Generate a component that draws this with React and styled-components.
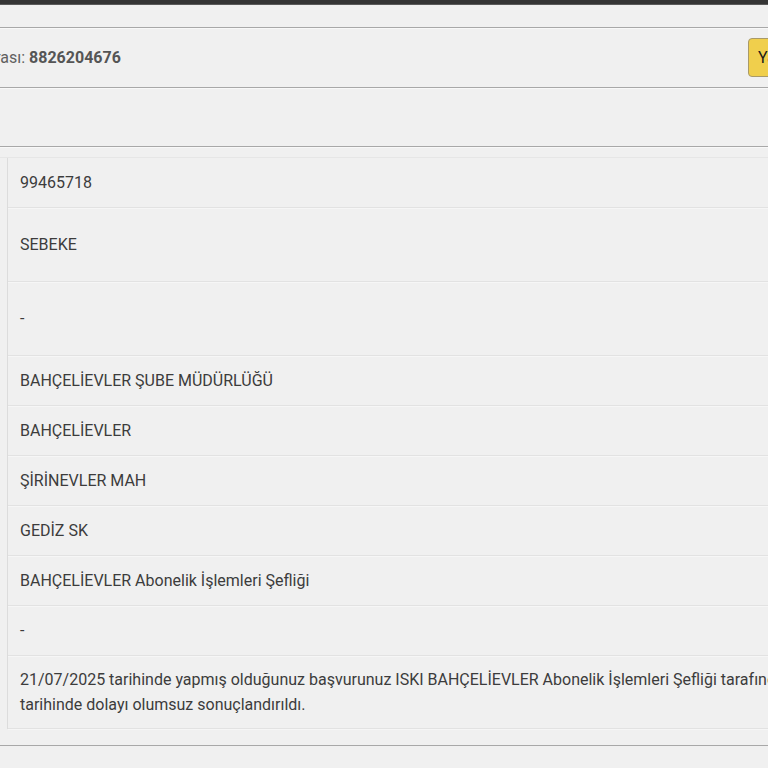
import React from "react";
import styled, { createGlobalStyle } from "styled-components";

const Global = createGlobalStyle`
  html, body { margin: 0; padding: 0; background: #f0f0f0; overflow: hidden; }
  body { font-family: Roboto, "Liberation Sans", Arial, sans-serif; width: 768px; height: 768px; }
`;

const Page = styled.div`
  width: 768px;
  height: 768px;
  overflow: hidden;
  background: #f0f0f0;
  display: flex;
  flex-direction: column;
`;

const TopBar = styled.div`
  height: 4px;
  background: #353535;
  border-bottom: 1px solid #5a5a5a;
  flex: none;
`;

const Band = styled.div`
  flex: none;
  height: ${(p) => p.h}px;
  border-bottom: 1px solid #a8a8a8;
  box-shadow: 0 1px 0 #f8f8f8;
  display: flex;
  align-items: center;
  justify-content: space-between;
  box-sizing: border-box;
`;

const InfoText = styled.div`
  font-size: 16px;
  color: #606060;
  margin-left: -80px;
  white-space: nowrap;
  b { font-weight: 700; color: #555; }
`;

const PrintButton = styled.button`
  margin-right: -60px;
  height: 39px;
  width: 80px;
  padding: 0 0 0 9px;
  text-align: left;
  background: #f0cf4c;
  border: 1px solid #a99a68;
  border-radius: 4px;
  font-family: inherit;
  font-size: 16px;
  color: #1a1a1a;
  flex: none;
`;

const TableWrap = styled.div`
  margin-top: 10px;
  border-top: 1px solid #e6e6e6;
  flex: none;
`;

const Table = styled.div`
  margin-left: 7px;
  border-left: 1px solid #dcdcdc;
  display: flex;
  flex-direction: column;
`;

const Row = styled.div`
  display: flex;
  align-items: center;
  min-height: ${(p) => (p.tall ? 73 : 49)}px;
  border-bottom: 1px solid #e2e2e2;
  box-shadow: 0 1px 0 #f6f6f6;
`;

const Value = styled.div`
  padding: ${(p) => (p.multi ? "11px 12px 11px" : "12px")};
  font-size: 16px;
  line-height: 25px;
  color: #3c3c3c;
  white-space: nowrap;
`;

const BottomRule = styled.div`
  margin-top: 16px;
  border-top: 1px solid #a8a8a8;
  flex: none;
`;

const rows = [
  { v: "99465718" },
  { v: "SEBEKE", tall: true },
  { v: "-", tall: true },
  { v: "BAHÇELİEVLER ŞUBE MÜDÜRLÜĞÜ" },
  { v: "BAHÇELİEVLER" },
  { v: "ŞİRİNEVLER MAH" },
  { v: "GEDİZ SK" },
  { v: "BAHÇELİEVLER Abonelik İşlemleri Şefliği" },
  { v: "-" },
];

export default function App() {
  return (
    <>
      <Global />
      <Page>
        <TopBar />
        <Band h={23} />
        <Band h={60}>
          <InfoText>
            Başvuru Sırası: <b>8826204676</b>
          </InfoText>
          <PrintButton>Yazdır</PrintButton>
        </Band>
        <Band h={59} />
        <TableWrap>
          <Table>
            {rows.map((r, i) => (
              <Row key={i} tall={r.tall}>
                <Value>{r.v}</Value>
              </Row>
            ))}
            <Row>
              <Value multi>
                21/07/2025 tarihinde yapmış olduğunuz başvurunuz ISKI BAHÇELİEVLER Abonelik İşlemleri Şefliği tarafından
                <br />
                tarihinde dolayı olumsuz sonuçlandırıldı.
              </Value>
            </Row>
          </Table>
        </TableWrap>
        <BottomRule />
      </Page>
    </>
  );
}
